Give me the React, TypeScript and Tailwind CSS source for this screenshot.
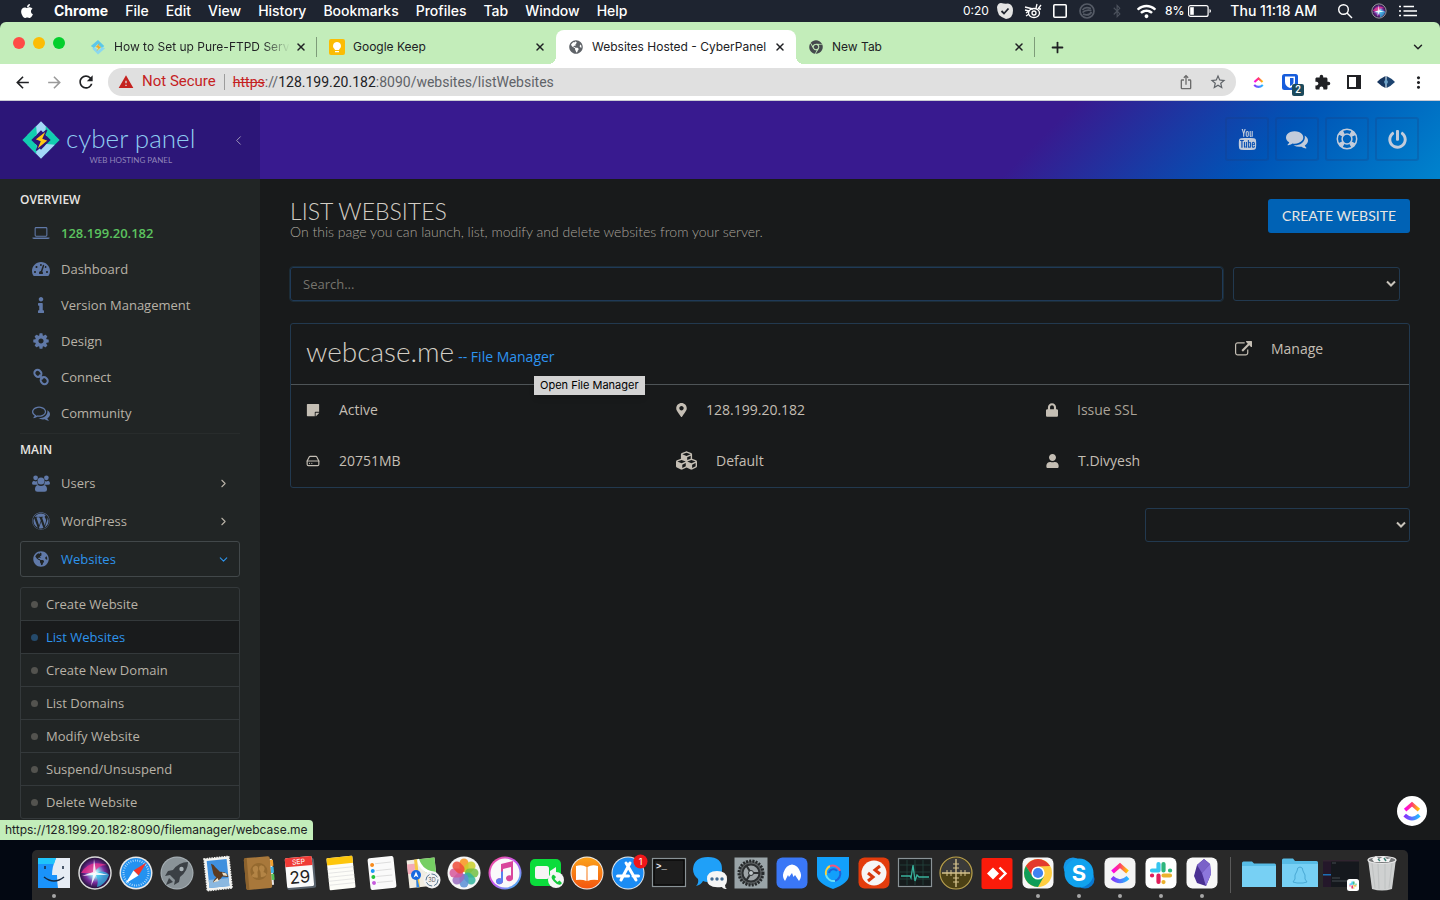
import React from "react";
import {
  FaApple, FaBluetoothB, FaChrome, FaCubes, FaGlobeAmericas, FaInfo, FaLock, FaMapMarkerAlt,
  FaPowerOff, FaStickyNote, FaTachometerAlt, FaUser, FaWordpress, FaWifi,
} from "react-icons/fa";
import { TfiYoutube } from "react-icons/tfi";
import { MdArrowBack, MdArrowForward, MdExtension, MdMoreVert, MdOutlineIosShare, MdRefresh, MdStarBorder, MdWarning } from "react-icons/md";
import { ChevronDown, ChevronLeft, ChevronRight, HardDrive, Plus, X } from "lucide-react";

/* ---------- icons ---------- */

const SECOND_BUBBLE =
  "q10 24 20.5 44t25 38.5 22.5 29 26 29.5 23 25q1 1 4 4.5t4.5 5 4 5 3.5 5.5l2.5 5 2 6 .5 6.5-1 6.5q-3 14-13 22t-22 7q-50-7-86-16-154-40-278-128-90 16-176 16-271 0-472-132 58 4 88 4 161 0 309-45t264-129q125-92 192-212t67-254q0-77-23-152 129 71 204 178t75 230q0 120-71 224.5t-195 176.5z";
const TAIL =
  "q-86 0-176-16-124 88-278 128-36 9-86 16h-3q-11 0-20.5-8t-11.5-21q-1-3-1-6.5t.5-6.5 2-6l2.5-5 3.5-5.5 4-5 4.5-5 4-4.5q5-6 23-25t26-29.5 22.5-29 25-38.5 20.5-44q-124-72-195-177t-71-224q0-139 94-257t256.5-186.5 353.5-68.5";

function CommentsIcon({ size }: { size: number }) {
  return (
    <svg width={size} height={size} viewBox="0 0 1792 1792" fill="currentColor" aria-hidden="true">
      <path d={"M1408 768q0 139-94 257t-256.5 186.5-353.5 68.5" + TAIL + " 353.5 68.5 256.5 186.5 94 257z"} />
      <path d={"M1526 1425" + SECOND_BUBBLE} />
    </svg>
  );
}

function CommentsOutlineIcon() {
  return (
    <svg width="18" height="18" viewBox="0 0 1792 1792" fill="currentColor" aria-hidden="true">
      <path
        fillRule="evenodd"
        d={
          "M704 384q-153 0-286 52t-211.5 141-78.5 191q0 82 53 158t149 132l97 56-35 84q34-20 62-39l44-31 53 10q78 14 153 14 153 0 286-52t211.5-141 78.5-191-78.5-191-211.5-141-286-52zm0-128q191 0 353.5 68.5t256.5 186.5 94 257-94 257-256.5 186.5-353.5 68.5" +
          TAIL + "z"
        }
      />
      <path d={"M1526 1425" + SECOND_BUBBLE} />
    </svg>
  );
}

function CogIcon() {
  return (
    <svg width="18" height="18" viewBox="0 0 1792 1792" fill="currentColor" aria-hidden="true">
      <path d="M1152 896q0-106-75-181t-181-75-181 75-75 181 75 181 181 75 181-75 75-181zm512-109v222q0 12-8 23t-20 13l-185 28q-19 54-39 91 35 50 107 138 10 12 10 25t-9 23q-27 37-99 108t-94 71q-12 0-26-9l-138-108q-44 23-91 38-16 136-29 186-7 28-36 28h-222q-14 0-24.5-8.5t-11.5-21.5l-28-184q-49-16-90-37l-141 107q-10 9-25 9-14 0-25-11-126-114-165-168-7-10-7-23 0-12 8-23 15-21 51-66.5t54-70.5q-27-50-41-99l-183-27q-13-2-21-12.5t-8-23.5v-222q0-12 8-23t19-13l186-28q14-46 39-92-40-57-107-138-10-12-10-24 0-10 9-23 26-36 98.5-107.5t94.5-71.5q13 0 26 10l138 107q44-23 91-38 16-136 29-186 7-28 36-28h222q14 0 24.5 8.5t11.5 21.5l28 184q49 16 90 37l142-107q9-9 24-9 13 0 25 10 129 119 165 170 7 8 7 22 0 12-8 23-15 21-51 66.5t-54 70.5q26 50 41 98l183 28q13 2 21 12.5t8 23.5z" />
    </svg>
  );
}

function LaptopIcon() {
  return (
    <svg width="20" height="18" viewBox="0 0 20 18" fill="none" aria-hidden="true">
      <rect x="3.5" y="3" width="13" height="9.6" rx="1" stroke="currentColor" strokeWidth="1.2" />
      <path d="M.5 14h19v.6c0 .6-.8 1-1.600 1H2.100c-.8 0-1.600-.4-1.600-1z" fill="currentColor" />
    </svg>
  );
}

function UsersIcon() {
  return (
    <svg width="20" height="19" viewBox="0 0 20 19" fill="currentColor" aria-hidden="true">
      <circle cx="4" cy="3.200" r="2.600" />
      <circle cx="16" cy="3.200" r="2.600" />
      <path d="M2 6.500q2 1.200 3.700.3-.3 2.500 1.300 4.200H2Q0 11 0 9.200t2-2.700zM18 6.500q-2 1.200-3.700.3.3 2.500-1.300 4.200h5q2 0 2-1.800t-2-2.700z" />
      <circle cx="10" cy="6.700" r="3.900" />
      <path d="M6.500 11.200q3.500 2.300 7 0 3.200.8 3.200 5 0 2.500-2.700 2.500H6q-2.700 0-2.700-2.500 0-4.200 3.200-5z" />
    </svg>
  );
}

function ChainIcon() {
  return (
    <svg width="18" height="18" viewBox="0 0 18 18" fill="none" stroke="currentColor" strokeWidth="2" aria-hidden="true">
      <rect x="2.200" y="2.200" width="7.400" height="6.400" rx="3.200" transform="rotate(45 5.900 5.400)" />
      <rect x="8.500" y="9.400" width="7.400" height="6.400" rx="3.200" transform="rotate(45 12.200 12.600)" />
      <path d="M7 7l4 4" />
    </svg>
  );
}

function LifeRingIcon() {
  return (
    <svg width="22" height="22" viewBox="0 0 22 22" fill="none" aria-hidden="true">
      <circle cx="11" cy="11" r="9.700" stroke="currentColor" strokeWidth="1.500" />
      <circle cx="11" cy="11" r="4.900" stroke="currentColor" strokeWidth="1.500" />
      <circle cx="11" cy="11" r="7.400" stroke="currentColor" strokeWidth="4.400" strokeDasharray="4.600 7.024" strokeDashoffset="-3.512" />
    </svg>
  );
}

function ExternalIcon() {
  return (
    <svg width="17" height="17" viewBox="0 0 1792 1792" fill="currentColor" aria-hidden="true">
      <path d="M1408 928v320q0 119-84.5 203.5t-203.5 84.5h-832q-119 0-203.5-84.5t-84.5-203.5v-832q0-119 84.5-203.5t203.5-84.5h704q14 0 23 9t9 23v64q0 14-9 23t-23 9h-704q-66 0-113 47t-47 113v832q0 66 47 113t113 47h832q66 0 113-47t47-113v-320q0-14 9-23t23-9h64q14 0 23 9t9 23zm384-864v512q0 26-19 45t-45 19-45-19l-176-176-652 652q-10 10-23 10t-23-10l-114-114q-10-10-10-23t10-23l652-652-176-176q-19-19-19-45t19-45 45-19h512q26 0 45 19t19 45z" />
    </svg>
  );
}

function CyberMark({ size, edge }: { size: number; edge: string }) {
  return (
    <svg width={size} height={size} viewBox="0 0 36 36" aria-hidden="true">
      <g transform="rotate(45 18 18)">
        <path d="M5.500 24V5.500H24l-5 6h-7.500V19z" fill="#a3d8f7" />
        <path d="M12 5.500h18.500V24l-6-5v-7.500H17z" fill="#12cdb0" />
        <path d="M30.500 12v18.500H12l5-6h7.500V17z" fill="#a3d8f7" />
        <path d="M24 30.500H5.500V12l6 5v7.500H19z" fill="#12cdb0" />
      </g>
      <path d="M23.500 8.500L12 17.500l5 2-3.500 8.500L25 18.500l-5-2z" fill="#ffc814" stroke={edge} strokeWidth="1.200" />
    </svg>
  );
}

function ClickUp({ size }: { size: number }) {
  return (
    <svg width={size} height={size} viewBox="0 0 24 24" fill="none" aria-hidden="true">
      <defs>
        <linearGradient id="cuTop" x1="0" x2="1"><stop stopColor="#ff02f0" /><stop offset=".5" stopColor="#ff3d6e" /><stop offset="1" stopColor="#ffc800" /></linearGradient>
        <linearGradient id="cuBottom" x1="0" x2="1"><stop stopColor="#8930fd" /><stop offset="1" stopColor="#22bcff" /></linearGradient>
      </defs>
      <path d="M4.500 11L12 4.500 19.500 11" stroke="url(#cuTop)" strokeWidth="4" />
      <path d="M4 16.500q8 7.500 16 0" stroke="url(#cuBottom)" strokeWidth="4" />
    </svg>
  );
}

function ChromeBall() {
  return (
    <g transform="translate(18 18)">
      <circle r="14" fill="#ffcd40" />
      <path d="M-12.120-7A14 14 0 0 1 12.120-7L0-6.500-5.800 3.500z" fill="#e33b2e" />
      <path d="M-12.120-7A14 14 0 0 0 0 14L6 3.300-5.600 3.300z" fill="#0f9d58" />
      <circle r="6.600" fill="#fff" />
      <circle r="5.100" fill="#3e82f1" />
    </g>
  );
}

function SlackMark() {
  return (
    <g strokeWidth="4.200" strokeLinecap="round" fill="none">
      <path d="M15.500 9v6.500M9 15.500h6" stroke="#36c5f0" />
      <path d="M20.500 9v6.500M27 15.500h.1" stroke="#2eb67d" />
      <path d="M20.500 20.500H27M20.500 27v.1" stroke="#ecb22e" />
      <path d="M15.500 20.500V27M9 20.500h.1" stroke="#e01e5a" />
    </g>
  );
}

/* ---------- menu bar ---------- */

const MENUS = ["File", "Edit", "View", "History", "Bookmarks", "Profiles", "Tab", "Window", "Help"];

function MenuBar() {
  return (
    <header className="flex h-[22px] shrink-0 items-center bg-[#1e2430] font-['Inter',sans-serif] text-sm font-medium text-white">
      <nav className="flex flex-1 items-center gap-[17px] pl-[19px]">
        <button aria-label="Apple menu" className="w-[18px]"><FaApple size={16} /></button>
        <button className="font-bold">Chrome</button>
        {MENUS.map((m) => <button key={m}>{m}</button>)}
      </nav>
      <div className="flex items-center pr-[23px]">
        <span className="w-7 text-xs font-normal">0:20</span>
        <span className="flex w-7 justify-center">
          <svg width="16" height="16" viewBox="0 0 16 16"><path d="M4 0Q8 1 11 .5q5 1 5 7 0 8-7 8.500Q4 14 2 12 0 8 0 4q1-4 4-4z" fill="#e4e4e4" /><path d="M4.500 8l2.500 2.500 4.500-5" stroke="#20252f" strokeWidth="1.800" fill="none" /></svg>
        </span>
        <span className="flex w-7 justify-center">
          <svg width="18" height="16" viewBox="0 0 18 16" fill="none" stroke="#fff" strokeWidth="1.300"><ellipse cx="10" cy="10" rx="5.500" ry="4.500" /><circle cx="10" cy="10" r="2" /><path d="M1 4l8 2M1 7l4 1M14 6l3-4M12 5l1-4M2 10l3-2M2 13l3-2M15 6h2" /></svg>
        </span>
        <span className="flex w-[26px] justify-center">
          <svg width="14" height="14" viewBox="0 0 14 14" fill="none" stroke="#fff" strokeWidth="1.600"><rect x=".8" y=".8" width="12.400" height="12.400" rx="1" /></svg>
        </span>
        <span className="flex w-7 justify-center">
          <svg width="16" height="16" viewBox="0 0 16 16" fill="none" stroke="#555b66" strokeWidth="1.700"><circle cx="8" cy="8" r="7" /><path d="M3.500 7Q6 3 12 5.500M3.500 9.500Q7 6 12.500 7.500M4 11Q10 13.500 12.500 9" /></svg>
        </span>
        <span className="flex w-8 justify-center text-[#4b515c]"><FaBluetoothB size={14} /></span>
        <span className="flex w-7 justify-center"><FaWifi size={19} /></span>
        <span className="ml-1 text-xs">8%</span>
        <svg className="ml-1" width="24" height="12" viewBox="0 0 24 12" fill="none"><rect x=".6" y=".6" width="19.500" height="10.800" rx="2" stroke="#fff" strokeWidth="1.200" /><rect x="2.200" y="2.200" width="3.600" height="7.600" fill="#fff" /><path d="M21.500 4v4q1.500-.5 1.500-2t-1.500-2z" fill="#fff" /></svg>
        <span className="ml-[18px]">Thu 11:18 AM</span>
        <svg className="ml-5" width="16" height="16" viewBox="0 0 16 16" fill="none" stroke="#fff" strokeWidth="1.400"><circle cx="6.500" cy="6.500" r="4.800" /><path d="M10 10l5 5" /></svg>
        <svg className="ml-[18px]" width="16" height="16" viewBox="0 0 36 36"><SiriBall /></svg>
        <svg className="ml-3" width="18" height="12" viewBox="0 0 18 12" fill="none" stroke="#fff" strokeWidth="1.700"><path d="M0 1.500h2M4.500 1.500H15M0 6h2M4.500 6H18M0 10.500h2M4.500 10.500H18" /></svg>
      </div>
    </header>
  );
}

/* ---------- browser chrome ---------- */

function Tab({ icon, title, active, fade, divider }: { icon: React.ReactNode; title: string; active?: boolean; fade?: boolean; divider?: boolean }) {
  return (
    <div className={active
      ? "relative flex h-[34px] w-60 min-w-0 items-center rounded-t-lg bg-white pr-[10px] pl-3"
      : "relative flex h-[34px] w-[239px] min-w-0 items-center pr-[10px] pl-3"}>
      {active && (
        <>
          <span className="absolute bottom-0 -left-2 size-2 bg-[radial-gradient(circle_at_0_0,transparent_8px,#fff_8px)]" />
          <span className="absolute -right-2 bottom-0 size-2 bg-[radial-gradient(circle_at_100%_0,transparent_8px,#fff_8px)]" />
        </>
      )}
      {divider && <span className="absolute top-[7px] right-0 h-5 w-px bg-[#7e9c79]" />}
      <span className="flex size-4 shrink-0 items-center justify-center">{icon}</span>
      <span className={fade
        ? "ml-2 min-w-0 flex-1 overflow-hidden bg-[linear-gradient(90deg,#202124_150px,transparent_176px)] bg-clip-text whitespace-nowrap text-transparent"
        : "ml-2 min-w-0 flex-1 overflow-hidden whitespace-nowrap"}>{title}</span>
      <button aria-label={"Close " + title} className="ml-1"><X size={12} strokeWidth={3} /></button>
    </div>
  );
}

function TabStrip() {
  return (
    <div className="flex h-[42px] shrink-0 items-end rounded-t-md bg-[#c3edba] font-['Inter',sans-serif] text-xs text-[#202124]">
      <div className="flex h-[42px] w-[78px] shrink-0 items-center gap-2 pl-[13px]">
        <button aria-label="Close window" className="size-3 rounded-full bg-[#ff4b46]" />
        <button aria-label="Minimise window" className="size-3 rounded-full bg-[#fcbc05]" />
        <button aria-label="Zoom window" className="size-3 rounded-full bg-[#04cf2d]" />
      </div>
      <Tab fade divider title="How to Set up Pure-FTPD Serv" icon={
        <svg width="16" height="16" viewBox="0 0 36 36"><path d="M18 2l14 14-5 5-10-9-8 9-7-5z" fill="#5cc8e8" /><path d="M18 35L5 22l5-4 9 8 8-8 7 3z" fill="#8ad8f0" /><path d="M22 9l-9 9 6 2-5 8 11-10-6-2z" fill="#f5a623" /></svg>} />
      <Tab title="Google Keep" icon={
        <svg width="16" height="16" viewBox="0 0 16 16"><rect width="16" height="16" rx="2" fill="#fbbc04" /><path d="M8 3a4 4 0 0 1 2.200 7.300V11H5.800v-.7A4 4 0 0 1 8 3zM6 12h4v1.300H6z" fill="#fff" /></svg>} />
      <Tab active title="Websites Hosted - CyberPanel" icon={<FaGlobeAmericas size={14} color="#5f6368" />} />
      <Tab divider title="New Tab" icon={<FaChrome size={14} color="#454a4d" />} />
      <button aria-label="New tab" className="flex h-[34px] w-11 items-center justify-center"><Plus size={17} strokeWidth={2.5} /></button>
      <button aria-label="Search tabs" className="ml-auto flex h-[34px] w-11 items-center justify-center"><ChevronDown size={14} strokeWidth={2.5} /></button>
    </div>
  );
}

function Toolbar() {
  return (
    <div className="flex h-[37px] shrink-0 items-center border-b border-[#c9cbd3] bg-white pr-1.5 pl-1.5 font-['Roboto',sans-serif] text-sm text-[#202124]">
      <button aria-label="Back" className="flex w-8 justify-center"><MdArrowBack size={19} /></button>
      <button aria-label="Forward" className="flex w-8 justify-center text-[#9a9a9a]"><MdArrowForward size={19} /></button>
      <button aria-label="Reload" className="flex w-8 justify-center"><MdRefresh size={20} /></button>
      <div className="ml-1.5 flex h-7 min-w-0 flex-1 items-center rounded-full bg-[#e0e0e0] pr-[9px] pl-[10px] whitespace-nowrap">
        <MdWarning size={16} color="#c5221f" />
        <span className="ml-2 text-[15px] text-[#c5221f]">Not Secure</span>
        <span className="mx-2 h-4 w-px bg-[#9c9c9c]" />
        <span className="flex-1 text-[#5f6368]">
          <span className="text-[#c5221f] line-through">https</span>://<span className="text-[#202124]">128.199.20.182</span>:8090/websites/listWebsites
        </span>
        <button aria-label="Share" className="text-[#6b6b6b]"><MdOutlineIosShare size={16} /></button>
        <button aria-label="Bookmark" className="ml-[15px] text-[#5f6368]"><MdStarBorder size={18} /></button>
      </div>
      <div className="ml-1.5 flex items-center">
        <button aria-label="ClickUp" className="flex w-8 justify-center"><ClickUp size={13} /></button>
        <button aria-label="Bitwarden, 2 logins" className="relative flex w-8 justify-center">
          <svg width="16" height="16" viewBox="0 0 16 16"><rect width="16" height="16" rx="2.500" fill="#175ddc" /><path d="M3 2.500h10V8q0 4-5 6-5-2-5-6z" fill="#fff" /><path d="M8 4h3.500v4q0 2.500-3.500 4z" fill="#175ddc" /></svg>
          <span className="absolute top-[10px] left-[18px] flex h-3 w-3 items-center justify-center rounded-xs bg-[#1c4a5c] text-[10px] font-medium text-white">2</span>
        </button>
        <button aria-label="Extensions" className="flex w-8 justify-center"><MdExtension size={17} /></button>
        <button aria-label="Side panel" className="flex w-8 justify-center">
          <svg width="14" height="14" viewBox="0 0 14 14"><rect x="1" y="1" width="12" height="12" fill="none" stroke="#202124" strokeWidth="2" /><path d="M9 1h4v12H9z" fill="#202124" /></svg>
        </button>
        <button aria-label="Profile" className="flex w-8 justify-center">
          <svg width="18" height="12" viewBox="0 0 18 12"><path d="M0 6Q4 2 8.500 0v12Q4 10 0 6z" fill="#17365f" /><path d="M18 6Q14 2 9.500 0v12Q14 10 18 6z" fill="#1d4470" /><path d="M9 2l2 4-2 4-2-4z" fill="#6fa3c8" /></svg>
        </button>
        <button aria-label="Browser menu" className="flex w-8 justify-center"><MdMoreVert size={19} /></button>
      </div>
    </div>
  );
}

/* ---------- CyberPanel sidebar ---------- */

const OVERVIEW = [
  { label: "Dashboard", icon: <FaTachometerAlt size={18} /> },
  { label: "Version Management", icon: <FaInfo size={16} /> },
  { label: "Design", icon: <CogIcon /> },
  { label: "Connect", icon: <ChainIcon /> },
  { label: "Community", icon: <CommentsOutlineIcon /> },
];
const SUBMENU = ["Create Website", "List Websites", "Create New Domain", "List Domains", "Modify Website", "Suspend/Unsuspend", "Delete Website"];

function NavItem({ icon, children, open, arrow, live }: { icon: React.ReactNode; children: React.ReactNode; open?: boolean; arrow?: boolean; live?: boolean }) {
  return (
    <a href="#" className={open
      ? "flex h-9 items-center rounded-[3px] border border-[#42484a] pr-[9px] pl-[11px] text-[#2d94ec]"
      : live
        ? "flex h-9 items-center border border-transparent pr-[9px] pl-[11px] font-semibold text-[#5cc35f]"
        : "flex h-9 items-center border border-transparent pr-[9px] pl-[11px]"}>
      <span className="flex w-[18px] shrink-0 justify-center text-[#6079a8]">{icon}</span>
      <span className="ml-[11px] flex-1 pt-0.5">{children}</span>
      {arrow && (open ? <ChevronDown size={13} /> : <ChevronRight size={13} />)}
    </a>
  );
}

function Sidebar() {
  return (
    <aside className="flex w-[260px] shrink-0 flex-col bg-[#212525] font-['Open_Sans',sans-serif] text-[13px] text-[#b8b2a7]">
      <div className="flex h-[78px] shrink-0 items-center bg-[#2c1678] pr-[14px] pl-[22px]">
        <a href="#" aria-label="Cyber Panel home" className="flex items-center gap-[6px]">
          <CyberMark size={38} edge="#2c1678" />
          <span className="flex flex-col items-center pt-1 font-['Lato',sans-serif]">
            <span className="text-[26px] leading-9 font-light text-[#8fcdf2]">cyber panel</span>
            <span className="text-[8px] leading-2 text-[#8f84b8]">WEB HOSTING PANEL</span>
          </span>
        </a>
        <button aria-label="Collapse sidebar" className="ml-auto text-[#9c93b8]"><ChevronLeft size={15} strokeWidth={1.6} /></button>
      </div>
      <nav className="flex flex-col px-5 pt-1.5">
        <h2 className="flex h-[30px] items-center text-xs font-semibold text-[#e8e6e3]">OVERVIEW</h2>
        <NavItem live icon={<LaptopIcon />}>128.199.20.182</NavItem>
        {OVERVIEW.map((i) => <NavItem key={i.label} icon={i.icon}>{i.label}</NavItem>)}
        <h2 className="mt-[2px] flex h-8 items-center border-t border-[#282c2c] text-xs font-semibold text-[#e8e6e3]">MAIN</h2>
        <div className="flex flex-col gap-[2px]">
          <NavItem arrow icon={<UsersIcon />}>Users</NavItem>
          <NavItem arrow icon={<FaWordpress size={18} />}>WordPress</NavItem>
          <NavItem arrow open icon={<FaGlobeAmericas size={16} />}>Websites</NavItem>
        </div>
        <ul className="mt-[10px] divide-y divide-[#34393b] rounded-[3px] border border-[#34393b]">
          {SUBMENU.map((s) => (
            <li key={s}>
              <a href="#" className={s === "List Websites"
                ? "flex h-8 items-center gap-2 bg-[#191b1c] pl-[10px] text-[#2d94ec]"
                : "flex h-8 items-center gap-2 pl-[10px]"}>
                <span className={s === "List Websites" ? "size-[7px] rounded-full bg-[#254a6b]" : "size-[7px] rounded-full bg-[#53534f]"} />
                <span className="pt-0.5">{s}</span>
              </a>
            </li>
          ))}
        </ul>
      </nav>
    </aside>
  );
}

/* ---------- CyberPanel main area ---------- */

function TopButton({ label, children }: { label: string; children: React.ReactNode }) {
  return (
    <button aria-label={label} className="flex size-11 items-center justify-center rounded-[3px] border-2 border-[#1c3c7c]/25 text-[#c3ccdb]">{children}</button>
  );
}

function Select({ label, className }: { label: string; className: string }) {
  return (
    <div className={className}>
      <select aria-label={label} className="h-[34px] w-full appearance-none rounded-[3px] border border-[#22394f] bg-[#181a1b] px-3"><option value=""></option></select>
      <svg className="pointer-events-none absolute top-[13px] right-1" width="10" height="8" viewBox="0 0 10 8" fill="none" stroke="#c8c3ba" strokeWidth="2"><path d="M1 1.500l4 4 4-4" /></svg>
    </div>
  );
}

const DETAILS = [
  { icon: <FaStickyNote size={14} />, text: "Active" },
  { icon: <FaMapMarkerAlt className="h-[14px] w-[11px]" />, text: "128.199.20.182" },
  { icon: <FaLock className="h-[14px] w-3" />, text: "Issue SSL", link: true },
  { icon: <HardDrive size={14} strokeWidth={2} />, text: "20751MB" },
  { icon: <FaCubes size={21} />, text: "Default" },
  { icon: <FaUser className="h-[14px] w-[13px]" />, text: "T.Divyesh" },
];

function Main() {
  return (
    <div className="flex min-w-0 flex-1 flex-col font-['Open_Sans',sans-serif] text-sm text-[#c4beb4]">
      <div className="flex h-[78px] shrink-0 items-center justify-end gap-1.5 bg-[linear-gradient(135deg,#381a8f_65%,#0054b6_84%,#0083cd_100%)] pr-[21px] pb-[2px]">
        <TopButton label="YouTube"><TfiYoutube size={21} /></TopButton>
        <TopButton label="Forums"><CommentsIcon size={22} /></TopButton>
        <TopButton label="Support"><LifeRingIcon /></TopButton>
        <TopButton label="Log out"><FaPowerOff size={19} /></TopButton>
      </div>
      <main className="flex flex-col px-[30px] pt-5">
        <div className="flex items-start justify-between font-['Lato',sans-serif]">
          <div>
            <h1 className="text-[23px] leading-6 font-light text-[#d3cec5]">LIST WEBSITES</h1>
            <p className="text-sm leading-[18px] font-light text-[#a8a49b]">On this page you can launch, list, modify and delete websites from your server.</p>
          </div>
          <button className="h-[34px] rounded-[3px] bg-[#0062b5] px-[14px] text-sm text-[#e8e6e3]">CREATE WEBSITE</button>
        </div>
        <div className="mt-[26px] flex gap-[10px] pr-[10px]">
          <input aria-label="Search websites" placeholder="Search..." className="h-[34px] min-w-0 flex-1 rounded-[3px] border border-[#1f3a58] bg-[#181a1b] px-3 text-[13px] outline outline-[#1c2c36] placeholder:text-[#76746d]" />
          <Select label="Records per page" className="relative w-[167px]" />
        </div>
        <section className="mt-[22px] rounded-[3px] border border-[#22394f]">
          <div className="relative flex h-[61px] border-b border-[#4e5457] pl-[15px]">
            <div className="flex flex-1 items-baseline gap-1 pt-[9px]">
              <h2 className="font-['Lato',sans-serif] text-[28px] leading-9 font-light text-[#d3cec5]">webcase.me</h2>
              <a href="#" className="font-medium text-[#2d94f0]">-- File Manager</a>
            </div>
            <a href="#" className="flex h-[50px] w-[174px] items-center gap-[19px]"><ExternalIcon />Manage</a>
            <span role="tooltip" className="absolute top-[52px] left-[243px] flex h-[19px] items-center bg-[#d3d3d3] px-1.5 font-['Inter',sans-serif] text-[11px] text-black shadow-md">Open File Manager</span>
          </div>
          <div className="grid grid-cols-[1fr_1fr_363px] pl-[15px]">
            {DETAILS.map((d) => (
              <div key={d.text} className="flex h-[51px] items-center gap-[19px] pb-0.5">
                {d.icon}
                {d.link ? <a href="#" className="text-[#aaa398]">{d.text}</a> : <span>{d.text}</span>}
              </div>
            ))}
          </div>
        </section>
        <Select label="Page" className="relative mt-5 w-[265px] self-end" />
      </main>
    </div>
  );
}

/* ---------- dock ---------- */

function SiriBall() {
  return (
    <>
      <defs>
        <radialGradient id="siri"><stop stopColor="#fff" /><stop offset=".25" stopColor="#8fd8f0" /><stop offset=".6" stopColor="#7a2a9c" /><stop offset="1" stopColor="#1a1030" /></radialGradient>
      </defs>
      <circle cx="18" cy="18" r="16" fill="url(#siri)" stroke="#d8d8d8" strokeWidth="1.500" />
      <path d="M4 18q8-14 26-8-10 0-12 8Z" fill="#e8308c" opacity=".8" />
      <path d="M18 18q10-4 14 2-4 10-12 12 2-8-2-14z" fill="#2bc0e8" opacity=".7" />
      <path d="M17 4l2 13 12 3-12 0-5 11 2-11-11 1 11-4z" fill="#fff" opacity=".85" />
    </>
  );
}

const round = (fill: string) => <rect x="2.500" y="2.500" width="31" height="31" rx="6" fill={fill} />;

const DOCK: { name: string; running?: boolean; art: React.ReactNode }[] = [
  { name: "Finder", running: true, art: (<><path d="M2 3h32v30H2z" fill="#e6ecf4" /><path d="M2 3h18q-4 9-4 17h5q0 7 1 13H2z" fill="#1a93fb" /><path d="M2 3h18l-2 6H2z" fill="#1fc4fb" /><path d="M9 11v3M27 11v3M8 22q10 8 20 0" stroke="#16263c" strokeWidth="1.500" fill="none" /></>) },
  { name: "Siri", art: <SiriBall /> },
  { name: "Safari", art: (<><circle cx="18" cy="18" r="16.500" fill="#e8e8e8" /><circle cx="18" cy="18" r="15" fill="#2492f0" /><circle cx="18" cy="18" r="12.500" fill="none" stroke="#bfe2ff" strokeWidth="2" strokeDasharray=".8 1.500" /><path d="M28.500 7.500L20.500 20.500 15.500 15.500z" fill="#f5352b" /><path d="M7.500 28.500L20.500 20.500 15.500 15.500z" fill="#fff" /></>) },
  { name: "Launchpad", art: (<><circle cx="18" cy="18" r="16.500" fill="#a8b1b6" /><circle cx="18" cy="18" r="15.500" fill="#8a9398" /><path d="M29 7q-9 0-15 8l-5 1-3 5 5-1 5 5-1 5 5-3 1-5q8-6 8-15z" fill="#3b4045" /><circle cx="22.500" cy="14" r="2.200" fill="#a9b2b7" /><path d="M10 23l-3 7 7-3z" fill="#3b4045" /></>) },
  { name: "Mail", art: (<g transform="rotate(-6 18 18)"><rect x="5.500" y="2.500" width="25" height="32" fill="#f3f3f0" stroke="#f3f3f0" strokeWidth="1.500" strokeDasharray="1.500 1" /><path d="M8 5h20v27H8z" fill="#3f90de" /><path d="M8 24h20v8H8z" fill="#8bb8e0" /><path d="M12 8q3 1 4 4l4 5q4 0 7 3l1 3-6-1q-2 3-6 4l-4 1q1-3 4-5-3-2-3-6z" fill="#5c3b20" /><path d="M22 18l4 1 1 3-4-1z" fill="#eadfc9" /><path d="M12 27l5-4 1 3z" fill="#f0ead9" /></g>) },
  { name: "Contacts", art: (<g transform="rotate(-5 18 18)"><path d="M28 5h4v26h-4z" fill="#e8e8e8" /><path d="M30 6h3v6h-3z" fill="#f2a12f" /><path d="M30 13h3v6h-3z" fill="#3eb4e8" /><path d="M30 20h3v6h-3z" fill="#58c35a" /><rect x="4" y="2" width="26" height="32" rx="2" fill="#a8783b" /><path d="M4 4q0-2 2-2h1v32H6q-2 0-2-2z" fill="#8c622d" /><circle cx="18" cy="16.500" r="8.500" fill="#94692f" /><path d="M15 10.500q3 0 2.500 4l-1 2.500v5.500q-4 0-6-2 .5-2 3-3-1.500-2-1.500-4t3-3zM21 10.500q-3 0-2.500 4l1 2.500v5.500q4 0 6-2-.5-2-3-3 1.500-2 1.500-4t-3-3z" fill="#b38445" /></g>) },
  { name: "Calendar", art: (<g transform="rotate(-5 18 18)"><rect x="4" y="4" width="29" height="30" rx="2" fill="#57606a" /><rect x="4" y="2" width="27" height="30" rx="1.500" fill="#fafafa" /><path d="M4 3.500Q4 2 5.500 2h24Q31 2 31 3.500V11H4z" fill="#f03b36" /><text x="17.500" y="9" textAnchor="middle" fontFamily="Inter" fontSize="7" fill="#fff">SEP</text><text x="17.500" y="28" textAnchor="middle" fontFamily="Inter" fontSize="17" fill="#222">29</text></g>) },
  { name: "Notes", art: (<g transform="rotate(-6 18 18)"><rect x="5" y="2" width="26" height="32" rx="1" fill="#fdfdf8" /><path d="M5 3q0-1 1-1h24q1 0 1 1v6H5z" fill="#fdc60c" /><path d="M5 13h26M5 17h26M5 21h26M5 25h26M5 29h26" stroke="#ddd" strokeWidth=".7" /></g>) },
  { name: "Reminders", art: (<g transform="rotate(-6 18 18)"><rect x="5" y="2" width="26" height="32" rx="2" fill="#fafafa" /><path d="M12 8h16M12 15h16M12 21h16M12 27h16" stroke="#ddd" /><circle cx="9" cy="9" r="2" fill="#f78b1e" /><circle cx="9" cy="15" r="2" fill="#1c98f5" /><circle cx="9" cy="21" r="2" fill="#27c43b" /><circle cx="9" cy="27" r="2" fill="#c65bdd" /></g>) },
  { name: "Maps", art: (<><g transform="rotate(-6 16 18)"><path d="M3 4h28v28H3z" fill="#f1ede2" /><path d="M13 4h18v18q-14-2-18-18z" fill="#76cf63" /><path d="M14 4q3 14 17 16" stroke="#fff" strokeWidth="3" fill="none" /><path d="M3 8h9l-3 10H3z" fill="#f3aab8" /><path d="M12 4v28" stroke="#f5c845" strokeWidth="3" /><path d="M11 18l2 14h-3z" fill="#2880ea" /></g><circle cx="11" cy="20" r="5" fill="#1769e0" /><path d="M11 16.500l2.500 6-2.500-1.500-2.500 1.500z" fill="#fff" /><circle cx="27" cy="25" r="8.500" fill="#f2f2f2" /><circle cx="27" cy="25" r="6" fill="none" stroke="#56758e" strokeDasharray="7 2" /><text x="27" y="27" textAnchor="middle" fontFamily="Inter" fontSize="5.500" fill="#555">3D</text></>) },
  { name: "Photos", art: (<><circle cx="18" cy="18" r="16.500" fill="#f6f6f6" />{["#f8941d", "#c9cf2b", "#72bf44", "#2fb49c", "#5b8fd6", "#9a6cc0", "#d7579a", "#ee4b3a"].map((c, i) => <rect key={c} x="13.500" y="3.500" width="9" height="13.500" rx="4.500" fill={c} opacity=".85" transform={`rotate(${i * 45} 18 18)`} />)}</>) },
  { name: "iTunes", art: (<><defs><linearGradient id="tune" x1="0" y1="0" x2="1" y2="1"><stop stopColor="#fb4b8a" /><stop offset=".5" stopColor="#c65bf2" /><stop offset="1" stopColor="#27c8f5" /></linearGradient></defs><circle cx="18" cy="18" r="16.500" fill="url(#tune)" /><circle cx="18" cy="18" r="14.500" fill="#fafafa" /><path d="M14 9l12-3v17a3.500 3 0 1 1-2-2.500V12l-8 2v12a3.500 3 0 1 1-2-2.500z" fill="#d9479c" /><path d="M14 17l2-1v10a3.500 3 0 1 1-2-2.500z" fill="#5b7ff0" /></>) },
  { name: "FaceTime", art: (<><rect x="2" y="4" width="31" height="27" rx="5" fill="#0bdc3c" /><rect x="7" y="11" width="14" height="13" rx="2.500" fill="#f5f5f5" /><path d="M22 16l6-4v11l-6-4z" fill="#f5f5f5" /><circle cx="28" cy="25" r="8" fill="#f5f5f5" /><path d="M24 21q1-2 2-1l2 2-1.500 2 3 3 2-1.500 2 2q1 1-1 2-3 1-6.500-3t-2-5.500z" fill="#16c83c" /></>) },
  { name: "Books", art: (<><defs><linearGradient id="books" x1="0" y1="0" x2="0" y2="1"><stop stopColor="#fba21a" /><stop offset="1" stopColor="#f4560f" /></linearGradient></defs><circle cx="18" cy="18" r="16.500" fill="#eee" /><circle cx="18" cy="18" r="15.500" fill="url(#books)" /><path d="M7 11q6-2 10.500 1v14Q13 24 7 25zM29 11q-6-2-10.500 1v14q4.500-2 10.500-1z" fill="#fff" /></>) },
  { name: "App Store", art: (<><circle cx="18" cy="18" r="16.500" fill="#e8e8e8" /><circle cx="18" cy="18" r="15.500" fill="#1b8cf4" /><path d="M20 8L11 25M16 8l10 17M7.500 21h11M23 21h5.500" stroke="#fff" strokeWidth="3" strokeLinecap="round" /><circle cx="30.500" cy="6.500" r="7" fill="#f0161a" /><text x="30.500" y="10" textAnchor="middle" fontFamily="Inter" fontSize="9" fill="#fff">1</text></>) },
  { name: "Terminal", art: (<><rect x="1.500" y="3.500" width="33" height="28" fill="#222" stroke="#8a9397" strokeWidth="1.200" /><rect x="3" y="5" width="30" height="25" fill="#1d1d1d" stroke="#000" /><text x="5" y="13.500" fontFamily="Liberation Mono" fontWeight="700" fontSize="9" fill="#f0f0f0">&gt;_</text></>) },
  { name: "Messages", art: (<><path d="M16 2q14 0 14 12T16 27q-3 0-5-1-2 4-7 5 3-3 2-7-5-4-5-10Q2 2 16 2z" fill="#1fa0f8" /><path d="M25 16q10 0 10 8 0 5-2 6 0 3 2 4-4 0-5-2-15 2-15-8 0-8 10-8z" fill="#f5f5f5" /><circle cx="20" cy="24" r="1.700" fill="#3f6a94" /><circle cx="25" cy="24" r="1.700" fill="#3f6a94" /><circle cx="30" cy="24" r="1.700" fill="#3f6a94" /></>) },
  { name: "System Preferences", art: (<><rect x="1.500" y="2.500" width="33" height="31" fill="#9aa4a8" /><circle cx="18" cy="18" r="12" fill="#5d6163" stroke="#26292b" strokeWidth="3" strokeDasharray="2 1.200" /><circle cx="18" cy="18" r="8.500" fill="#9da3a6" stroke="#2c2f31" strokeWidth="2" /><path d="M18 18h9M18 18l-5-8M18 18l-5 8" stroke="#2c2f31" strokeWidth="2" /><circle cx="18" cy="18" r="2.500" fill="#bfc6c9" stroke="#2c2f31" /></>) },
  { name: "NordVPN", art: (<>{round("#3a77f6")}<path d="M11 26Q8 22 9.500 17.500 12 10 18 9.500q6 .5 8.500 8Q28 22 25 26l-4-6-1.500 2L18 18l-3 4-1-2z" fill="#fff" /></>) },
  { name: "Hotspot Shield", art: (<><path d="M2 2h32v18q0 8-16 14Q2 28 2 20z" fill="#12a0fb" /><g fill="none" strokeWidth="2"><path d="M11 20a8 8 0 0 1 4-9" stroke="#ffd23a" /><path d="M15 11a8 8 0 0 1 10 5" stroke="#f2547d" /><path d="M25 16a8 8 0 0 1-5 10" stroke="#1c62d8" /><path d="M20 26a8 8 0 0 1-9-6" stroke="#6fe0f6" /><path d="M14 18a4.500 4.500 0 0 1 8-2" stroke="#1c62d8" /></g></>) },
  { name: "Remote Desktop", art: (<>{round("#e33c0c")}<circle cx="18" cy="18" r="12.500" fill="#f6f6f6" /><path d="M12 18l5 4-5 4M24 11l-5 4 5 4" fill="none" stroke="#d8390d" strokeWidth="3" /></>) },
  { name: "Activity Monitor", art: (<><rect x="1.500" y="3.500" width="33" height="28" fill="#151b1c" stroke="#8a9397" strokeWidth="1.200" /><path d="M3 10h30M3 17h30M3 24h30M10 5v25M18 5v25M26 5v25" stroke="#24443f" strokeWidth=".8" /><path d="M4 21h9l1 2 2-13 2 16 2-6 2 2h10" fill="none" stroke="#38b29c" strokeWidth="1.300" /></>) },
  { name: "Spectrum Scope", art: (<><circle cx="18" cy="18" r="16" fill="#4c4115" stroke="#b8a050" strokeWidth="1.200" /><path d="M3 18a15 15 0 0 1 30 0z" fill="#3a3a3a" /><path d="M18 4v28M4 18h28" stroke="#d4c18c" strokeWidth="1.400" /><path d="M15 9h6M15 13h6M15 23h6M15 27h6M9 15v6M13 15v6M23 15v6M27 15v6" stroke="#d4c18c" /></>) },
  { name: "AnyDesk", art: (<><rect x="2.500" y="3" width="31" height="31" rx="2" fill="#fb1b0a" /><path d="M14 12.500l6 6-6 6-6-6z" fill="#fff" /><path d="M20.500 12.500l6 6-6 6" fill="none" stroke="#fff" strokeWidth="2.400" /></>) },
  { name: "Google Chrome", running: true, art: (<>{round("#f7f7f7")}<ChromeBall /></>) },
  { name: "Skype", running: true, art: (<><circle cx="12" cy="12" r="9.500" fill="#1496e8" /><circle cx="24" cy="24" r="9.500" fill="#0a78d0" /><circle cx="18" cy="18" r="14.500" fill="#10a2ee" /><text x="18" y="26" textAnchor="middle" fontFamily="Inter" fontWeight="700" fontSize="22" fill="#fff">S</text></>) },
  { name: "ClickUp", running: true, art: (<>{round("#f4f4f4")}<svg x="6" y="6" width="24" height="24"><ClickUp size={24} /></svg></>) },
  { name: "Slack", running: true, art: (<>{round("#fff")}<SlackMark /></>) },
  { name: "Obsidian", running: true, art: (<>{round("#f8f8f8")}<path d="M20 4l6 5 1 10-5 12-9-3-3-7 3-11z" fill="#4a3193" /><path d="M20 4l6 5-8 9-5-8z" fill="#7a62c8" /><path d="M18 18l8-9 1 10-5 12z" fill="#8d77dc" /></>) },
];

const folder = (
  <><path d="M1 8q0-1.500 1.500-1.500H11l2 2h20.500Q35 8.500 35 10v21.500H1z" fill="#57bce6" /><path d="M1 11h34v21H1z" fill="#77d0f4" /></>
);

const DOCK_RIGHT: { name: string; art: React.ReactNode }[] = [
  { name: "Documents", art: folder },
  { name: "Linux folder", art: (<><path d="M0 5q0-1.500 1.500-1.500H11l2 2.500h21.500Q36 6 36 7.500V31H0z" fill="#57bce6" /><path d="M0 9h36v23H0z" fill="#77d0f4" /><path d="M18 12q3 0 3 4 3 4 2 8l2 3-4 1h-6l-4-1 2-3q-1-4 2-8 0-4 3-4z" fill="none" stroke="#49a9d4" /></>) },
  { name: "Minimised Slack window", art: (<><path d="M0 5h36v27H0z" fill="#15181d" /><path d="M0 5h8v27H0z" fill="#24172a" /><path d="M0 5h36v1.500H0z" fill="#30242f" /><path d="M0 19h8v1.500H0z" fill="#1c6fb4" /><path d="M9 8h4M9 23h8M9 26h16" stroke="#454a50" /><rect x="24" y="24" width="12" height="12" rx="2.500" fill="#fff" /><g transform="translate(24 24) scale(.333)"><SlackMark /></g></>) },
  { name: "Trash", art: (<><path d="M4 4h28l-4 30q-10 3-20 0z" fill="#cfd1d1" /><path d="M8 8l3 25M14 8l1 26M21 8v26M28 8l-3 25" stroke="#c0c3c3" strokeWidth="1.200" /><ellipse cx="18" cy="5" rx="14" ry="3.500" fill="#77797a" stroke="#e8e8e8" strokeWidth="1.200" /><path d="M8 4l4-3 3 3 5-3 3 3 4-1-2 4H10z" fill="#f3f3f3" /><path d="M14 4l2 2M20 3l2 3" stroke="#3a7f74" strokeWidth="1.500" /></>) },
];

function DockItem({ name, running, art }: { name: string; running?: boolean; art: React.ReactNode }) {
  return (
    <button aria-label={name} className="flex w-[41px] shrink-0 flex-col items-center pt-[5px]">
      <svg width="36" height="36" viewBox="0 0 36 36" className="overflow-visible">{art}</svg>
      {running && <span className="mt-[3px] size-1 rounded-full bg-[#a6a6a6]" />}
    </button>
  );
}

function Dock() {
  return (
    <footer className="flex shrink-0 justify-center bg-[#030812] pt-[10px]">
      <div className="flex h-[50px] rounded-t-[5px] bg-[#292929] pr-1.5 pl-px">
        {DOCK.map((d) => <DockItem key={d.name} {...d} />)}
        <span className="flex w-4 justify-center pt-[7px]"><span className="h-9 w-px bg-[#5a5a5a]" /></span>
        {DOCK_RIGHT.map((d) => <DockItem key={d.name} {...d} />)}
      </div>
    </footer>
  );
}

export default function App() {
  return (
    <div className="flex h-screen flex-col overflow-hidden bg-[#1e2430]">
      <MenuBar />
      <TabStrip />
      <Toolbar />
      <div className="relative flex min-h-0 flex-1 overflow-hidden bg-[#181a1b]">
        <Sidebar />
        <Main />
        <span className="absolute bottom-0 left-0 flex h-5 items-center rounded-tr-sm bg-[#c3edba] px-[5px] font-['Inter',sans-serif] text-xs text-[#202124]">https://128.199.20.182:8090/filemanager/webcase.me</span>
        <button aria-label="Open ClickUp" className="absolute right-[13px] bottom-[14px] flex size-[30px] items-center justify-center rounded-full bg-white"><ClickUp size={22} /></button>
      </div>
      <Dock />
    </div>
  );
}
